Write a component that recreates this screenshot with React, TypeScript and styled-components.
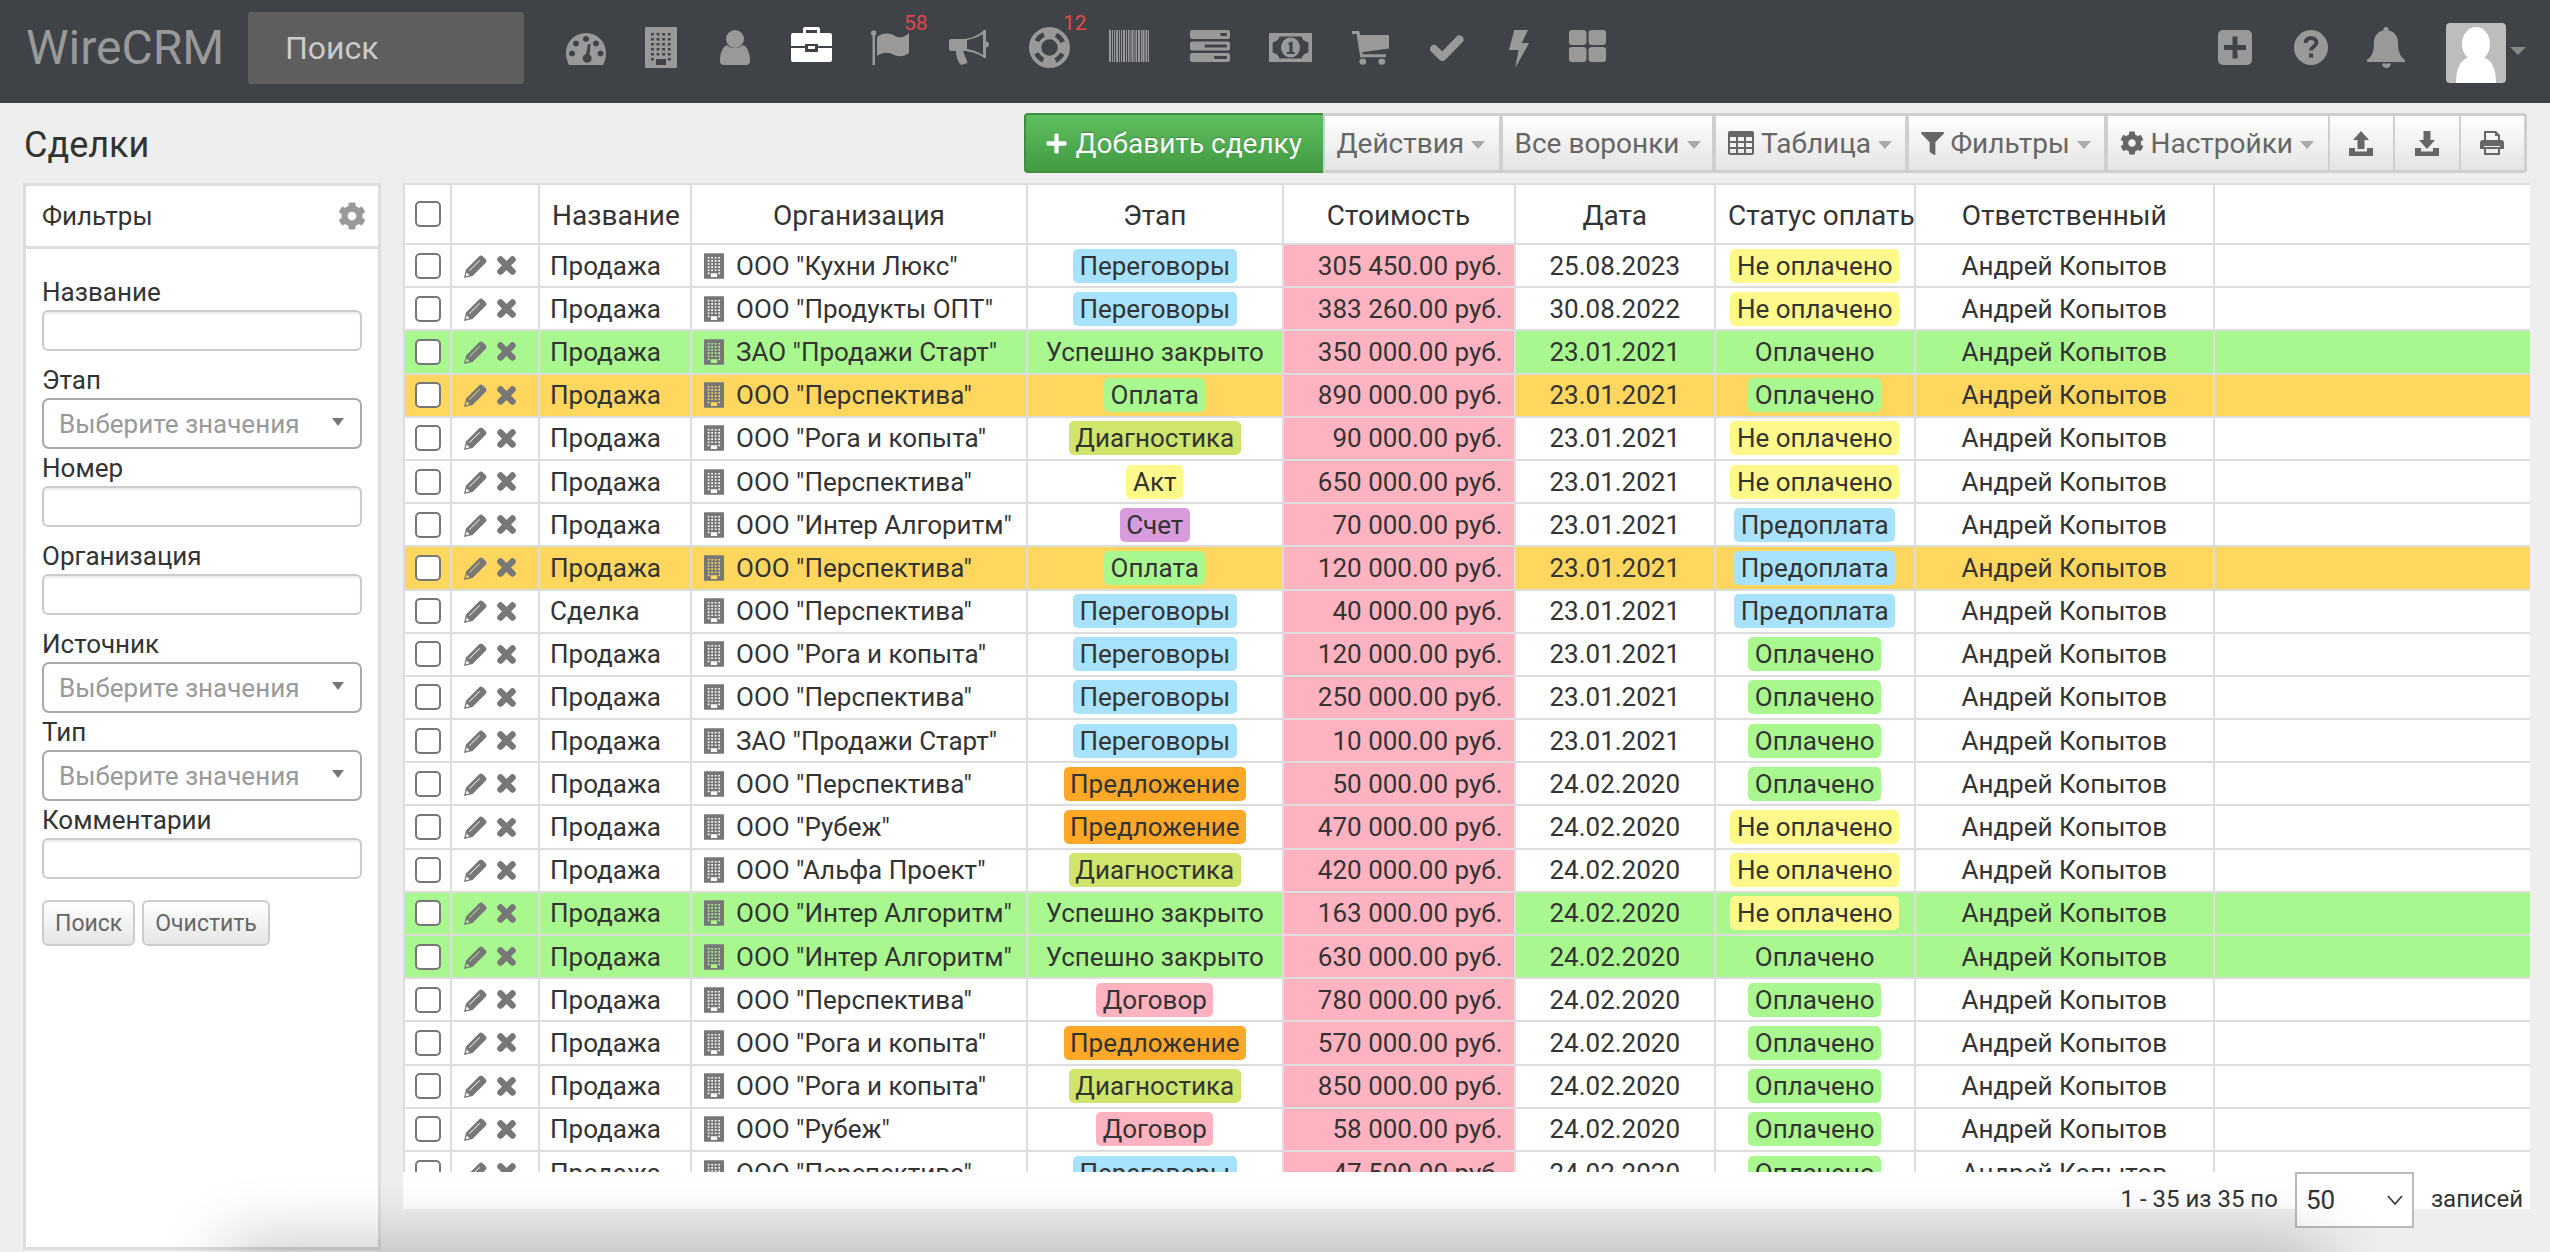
import React from "react";
import styled, { createGlobalStyle } from "styled-components";
import { FaCog, FaPlus, FaFilter } from "react-icons/fa";

const Global = createGlobalStyle`
  html, body { margin: 0; padding: 0; height: 1252px; overflow: hidden; background: #eeeeee; }
  body { font-family: Roboto, "Noto Sans", sans-serif; color: #333; }
  * { box-sizing: border-box; }
`;

const Page = styled.div`
  position: relative;
  width: 2550px;
  height: 1252px;
  overflow: hidden;
`;
const TopBar = styled.header`
  display: flex;
  align-items: flex-start;
  height: 103px;
  background: #3f4347;
  padding-left: 26px;
  padding-right: 24px;
`;
const Logo = styled.div`
  width: 222px;
  margin-top: 21px;
  font-size: 48px;
  line-height: 54px;
  color: #999;
`;
const SearchBox = styled.div`
  width: 276px;
  height: 72px;
  margin-top: 12px;
  padding-left: 37px;
  background: #5e5e5e;
  border-radius: 3px;
  font-size: 32px;
  line-height: 72px;
  color: #ccc;
`;
const Nav = styled.nav`
  display: flex;
  margin-left: 24px;
`;
const NavItem = styled.div<{ $w: number; $top: number; $on?: boolean }>`
  position: relative;
  display: flex;
  justify-content: center;
  width: ${(p) => p.$w}px;
  padding-top: ${(p) => p.$top}px;
  color: ${(p) => (p.$on ? "#fff" : "#999")};
`;
const Count = styled.span`
  position: absolute;
  top: 11px;
  left: 50%;
  margin-left: 14px;
  font-size: 21px;
  line-height: 24px;
  color: #e2474c;
`;
const RightNav = styled.div`
  display: flex;
  margin-left: auto;
  color: #999;
`;
const RightItem = styled.div<{ $w: number; $top: number }>`
  display: flex;
  justify-content: center;
  width: ${(p) => p.$w}px;
  padding-top: ${(p) => p.$top}px;
`;
const Avatar = styled.div`
  width: 60px;
  height: 60px;
  margin-top: 23px;
  margin-left: 23px;
  background: #bdbdbd;
  border-radius: 4px;
  overflow: hidden;
  color: #fff;
`;
const AvatarCaret = styled.div`
  width: 0;
  height: 0;
  margin-top: 47px;
  margin-left: 4px;
  border-left: 8px solid transparent;
  border-right: 8px solid transparent;
  border-top: 8px solid #888;
`;
const TitleRow = styled.div`
  display: flex;
  justify-content: space-between;
  align-items: flex-start;
  height: 80px;
  padding-left: 24px;
  padding-right: 23px;
`;
const Title = styled.h1`
  margin: 21px 0 0;
  font-size: 36px;
  line-height: 42px;
  font-weight: 400;
  color: #333;
`;
const Toolbar = styled.div`
  display: flex;
  margin-top: 10px;
  height: 60px;
`;
const ToolButton = styled.div<{ $w: number; $end?: boolean }>`
  display: flex;
  align-items: center;
  justify-content: ${(p) => (p.$end ? "center" : "flex-start")};
  gap: 7px;
  width: ${(p) => p.$w}px;
  padding-left: ${(p) => (p.$end ? 0 : 12)}px;
  background: linear-gradient(#ffffff, #e4e4e4);
  border: 2px solid #cfcfcf;
  border-left-width: ${(p) => (p.$end ? 0 : 2)}px;
  border-bottom-width: 3px;
  border-top-width: 3px;
  font-size: 28px;
  color: #666;
  white-space: nowrap;
  &:last-child { border-radius: 0 4px 4px 0; border-right-width: 3px; }
`;
const AddButton = styled.div`
  display: flex;
  align-items: center;
  gap: 8px;
  width: 299px;
  padding-left: 19px;
  background: linear-gradient(#5fbf5f, #429b42);
  border: 2px solid #3d8f3d;
  border-right: 0;
  border-radius: 4px 0 0 4px;
  font-size: 28px;
  color: #fff;
  text-shadow: 0 -1px 1px rgba(0, 0, 0, 0.25);
  white-space: nowrap;
`;
const Caret = styled.span`
  width: 0;
  height: 0;
  margin-top: 3px;
  border-left: 7.5px solid transparent;
  border-right: 7.5px solid transparent;
  border-top: 8px solid #aaa;
`;
const Content = styled.div`
  display: flex;
  align-items: flex-start;
  padding-left: 23px;
  padding-right: 20px;
  gap: 22px;
`;
const FilterPanel = styled.aside`
  flex: none;
  width: 358px;
  height: 1067px;
  background: #fff;
  border: 3px solid #ddd;
`;
const PanelHead = styled.div`
  display: flex;
  align-items: center;
  justify-content: space-between;
  height: 63px;
  padding: 0 12px 0 16px;
  border-bottom: 3px solid #ddd;
  font-size: 26px;
  color: #333;
  svg { color: #999; }
`;
const PanelBody = styled.div`
  padding: 26px 16px 0;
`;
const Field = styled.div`
  height: 88px;
`;
const FieldLabel = styled.label`
  display: block;
  height: 35px;
  font-size: 26px;
  line-height: 34px;
  color: #333;
`;
const TextBox = styled.div`
  width: 320px;
  height: 41px;
  background: #fff;
  border: 2px solid #ccc;
  border-radius: 6px;
  box-shadow: inset 0 2px 2px rgba(0, 0, 0, 0.07);
`;
const SelectBox = styled.div`
  display: flex;
  align-items: center;
  justify-content: space-between;
  width: 320px;
  height: 51px;
  padding: 0 16px 0 15px;
  background: #fff;
  border: 2px solid #aaa;
  border-radius: 7px;
  font-size: 26px;
  color: #999;
  white-space: nowrap;
`;
const SelectCaret = styled.span`
  width: 0;
  height: 0;
  margin-top: -3px;
  border-left: 6px solid transparent;
  border-right: 6px solid transparent;
  border-top: 8px solid #777;
`;
const ButtonRow = styled.div`
  display: flex;
  gap: 7px;
  margin-top: 9px;
`;
const FilterButton = styled.div`
  display: flex;
  align-items: center;
  justify-content: center;
  height: 46px;
  padding: 0 11px;
  background: linear-gradient(#ffffff, #e6e6e6);
  border: 2px solid #ccc;
  border-radius: 6px;
  font-size: 23px;
  color: #666;
`;
const Main = styled.main`
  flex: none;
  width: 2127px;
`;
const TableWrap = styled.div`
  height: 989px;
  overflow: hidden;
  background: #fff;
`;
const Table = styled.table`
  table-layout: fixed;
  width: 2127px;
  border-collapse: collapse;
  font-size: 26px;
  color: #333;
`;
const HeadRow = styled.tr`
  height: 60px;
`;
const Th = styled.th`
  padding: 2px 12px 0;
  border: 2px solid #ddd;
  background: #fff;
  font-size: 28px;
  font-weight: 400;
  text-align: center;
  white-space: nowrap;
  overflow: hidden;
`;
const CheckTh = styled(Th)`
  padding: 0;
`;
const Row = styled.tr<{ $tone?: string }>`
  height: 43.2px;
  background: ${(p) => (p.$tone === "green" ? "#a9f88f" : p.$tone === "orange" ? "#ffd75f" : "#fff")};
`;
const Td = styled.td<{ $align?: string }>`
  padding: 0 ${(p) => (p.$align === "right" ? "11px" : "0")} 0 ${(p) => (p.$align === "left" ? "10px" : "0")};
  border: 2px solid #ddd;
  text-align: ${(p) => p.$align || "center"};
  white-space: nowrap;
  overflow: hidden;
  line-height: 34px;
`;
const CostCell = styled(Td)`
  background: #ffb3c0;
`;
const CheckBox = styled.input.attrs({ type: "checkbox" })`
  appearance: none;
  display: block;
  width: 26px;
  height: 26px;
  margin: 0 0 0 10px;
  background: #fff;
  border: 2px solid #777;
  border-radius: 5px;
`;
const Actions = styled.div`
  display: flex;
  align-items: center;
  gap: 9px;
  padding-left: 12px;
  color: #777;
`;
const Org = styled.div`
  display: flex;
  align-items: center;
  gap: 12px;
  padding-left: 2px;
  svg { color: #777; flex: none; }
`;
const Badge = styled.span<{ $c: string }>`
  display: inline-block;
  height: 34px;
  padding: 0 6.5px;
  background: ${(p) => p.$c};
  border-radius: 5px;
  line-height: 34px;
`;
const Pager = styled.div`
  display: flex;
  justify-content: flex-end;
  align-items: flex-start;
  height: 37px;
  padding-right: 7px;
  background: #fff;
  font-size: 24px;
  color: #333;
`;
const PagerText = styled.span`
  margin-top: 12px;
  line-height: 30px;
  white-space: nowrap;
`;
const PageSize = styled.div`
  display: flex;
  align-items: center;
  justify-content: space-between;
  width: 119px;
  height: 56px;
  margin: 0 17px 0 17px;
  padding: 0 9px 0 9px;
  background: #fff;
  border: 2px solid #bbb;
  font-size: 26px;
  color: #333;
`;
const BottomShade = styled.div`
  position: absolute;
  left: 240px;
  right: 240px;
  top: 1262px;
  height: 30px;
  pointer-events: none;
  box-shadow: 0 0 70px 12px rgba(0, 0, 0, 0.3);
`;

/* ---------- icons ---------- */
const rect = (x: number, y: number, w: number, h: number) => `M${x} ${y}h${w}v${h}h${-w}z`;
const buildingPath = (() => {
  let d = "M1 0h30a1 1 0 0 1 1 1v39a1 1 0 0 1-1 1H1a1 1 0 0 1-1-1V1a1 1 0 0 1 1-1z";
  for (let r = 0; r < 5; r++) for (let c = 0; c < 4; c++) d += rect(6 + c * 5.6, 6 + r * 5, 2.8, 2.6);
  d += rect(6, 31, 2.8, 2.6) + rect(23, 31, 2.8, 2.6) + rect(11, 32, 10, 6);
  return d;
})();
const Building = ({ w = 32, h = 41 }: { w?: number; h?: number }) => (
  <svg width={w} height={h} viewBox="0 0 32 41" fill="currentColor"><path fillRule="evenodd" d={buildingPath} /></svg>
);
const Dashboard = () => (
  <svg width="40" height="32" viewBox="0 0 40 32" fill="currentColor">
    <path fillRule="evenodd" d="M3 32C1 28 0 24 0 20A20 20 0 0 1 40 20C40 24 39 28 37 32zM6 17.5a3 3 0 1 0 .01 0zM10 7.5a3 3 0 1 0 .01 0zM20 3a3 3 0 1 0 .01 0zM30 7.5a3 3 0 1 0 .01 0zM34.500 17.500a3 3 0 1 0 .01 0zM22 11l-2 10a4.500 4.500 0 1 0 3.500 .5l1-10.500z" />
  </svg>
);
const UserIcon = () => (
  <svg width="30" height="35" viewBox="0 0 30 35" fill="currentColor">
    <circle cx="15" cy="9" r="9" />
    <path d="M0 31C0 24 2 17 7 15C10 19 20 19 23 15C28 17 30 24 30 31a4 4 0 0 1-4 4H4a4 4 0 0 1-4-4z" />
  </svg>
);
const Briefcase = () => (
  <svg width="41" height="35" viewBox="0 0 41 35" fill="currentColor">
    <path d="M2 6H39a2 2 0 0 1 2 2V19H27V17H14V19H0V8a2 2 0 0 1 2-2z" />
    <path d="M12 6V2a2 2 0 0 1 2-2H27a2 2 0 0 1 2 2V6H26V3H15V6z" />
    <path d="M0 21H14V24a1 1 0 0 0 1 1H26a1 1 0 0 0 1-1V21H41V33a2 2 0 0 1-2 2H2a2 2 0 0 1-2-2z" />
    <path d="M17 19h7v3h-7z" />
  </svg>
);
const FlagIcon = () => (
  <svg width="39" height="35" viewBox="0 0 39 35" fill="currentColor">
    <rect x="1.500" y="3" width="2.500" height="32" />
    <circle cx="2.700" cy="3" r="2.700" />
    <path d="M6 7C12 2 20 3 24 6C29 9 34 7 38 3V23C33 27 28 27 23 25C18 22 12 22 6 26z" />
  </svg>
);
const Bullhorn = () => (
  <svg width="41" height="35" viewBox="0 0 41 35" fill="currentColor">
    <path fillRule="evenodd" d="M2 9H16C23 8 30 5 35 0H37V11.500a3 3 0 0 1 0 6V28H35C30 24 24 22 16 21H2a2 2 0 0 1-2-2V11a2 2 0 0 1 2-2zM18 10V19C24 20 29 22 34 25V4C29 7 24 9 18 10z" />
    <path d="M7 21H14L18 31a1.500 1.500 0 0 1-1 2.500L12 35C9 32 7 26 7 21z" />
  </svg>
);
const LifeRing = () => (
  <svg width="41" height="41" viewBox="0 0 41 41" fill="none" stroke="currentColor">
    <circle cx="20.500" cy="20.500" r="18.500" strokeWidth="4" />
    <circle cx="20.500" cy="20.500" r="10" strokeWidth="3.500" />
    <circle cx="20.500" cy="20.500" r="14.500" strokeWidth="9" strokeDasharray="12.800 10" strokeDashoffset="6.400" />
  </svg>
);
const barcodeBars: [number, number][] = [[0,2],[3,1],[5,1],[7,2],[10,1],[12,1],[14,2],[17,1],[19,1],[20.5,1],[22.5,2],[25.5,1],[27,1],[29,2],[32,1],[33.5,2],[36.500,1.500],[38.8,1.2]];
const Barcode = () => (
  <svg width="40" height="32" viewBox="0 0 40 32" fill="currentColor">
    {barcodeBars.map(([x, w]) => <rect key={x} x={x} y="0" width={w} height="32" />)}
  </svg>
);
const Tasks = () => (
  <svg width="40" height="32" viewBox="0 0 38 32" preserveAspectRatio="none" fill="currentColor">
    <path fillRule="evenodd" d="M2 0H36a2 2 0 0 1 2 2V7a2 2 0 0 1-2 2H2a2 2 0 0 1-2-2V2a2 2 0 0 1 2-2zM29 3v3h6V3zM2 11.500H36a2 2 0 0 1 2 2V18.500a2 2 0 0 1-2 2H2a2 2 0 0 1-2-2V13.500a2 2 0 0 1 2-2zM14 14.500v3h21v-3zM2 23H36a2 2 0 0 1 2 2V30a2 2 0 0 1-2 2H2a2 2 0 0 1-2-2V25a2 2 0 0 1 2-2zM23 26v3h12v-3z" />
  </svg>
);
const Money = () => (
  <svg width="43" height="29" viewBox="0 0 41 29" preserveAspectRatio="none" fill="currentColor">
    <path fillRule="evenodd" d="M0 0H41V29H0zM10 3.500H31Q32 8 37.500 9.500V19.500Q32 21 31 25.500H10Q9 21 3.500 19.500V9.500Q9 8 10 3.500zM20.500 4.500a9 10 0 1 0 .01 0zM19 9.500L22.500 8.500V19H24.500V21H17V19H19.500V11.500L18 12z" />
  </svg>
);
const Cart = () => (
  <svg width="37" height="34" viewBox="0 0 36 35" preserveAspectRatio="none" fill="currentColor">
    <path d="M0 0H7L8 4H36V18L10 22L10.500 24H33V27H8L4.500 3H0z" />
    <circle cx="10.500" cy="31.500" r="3.300" />
    <circle cx="29" cy="31.500" r="3.300" />
  </svg>
);
const Check = () => (
  <svg width="34" height="27" viewBox="0 0 33 27" preserveAspectRatio="none" fill="none" stroke="currentColor" strokeWidth="8" strokeLinejoin="round" strokeLinecap="round">
    <path d="M4 14L12 22L28.500 4.500" />
  </svg>
);
const Bolt = () => (
  <svg width="20" height="38" viewBox="0 0 19 38" preserveAspectRatio="none" fill="currentColor">
    <path d="M5 0H18L12 13H19L6 38L9 20H0z" />
  </svg>
);
const ThLarge = () => (
  <svg width="37" height="32" viewBox="0 0 35 32" preserveAspectRatio="none" fill="currentColor">
    <rect x="0" y="0" width="16.500" height="15" rx="3" />
    <rect x="18.500" y="0" width="16.500" height="15" rx="3" />
    <rect x="0" y="17" width="16.500" height="15" rx="3" />
    <rect x="18.500" y="17" width="16.500" height="15" rx="3" />
  </svg>
);
const PlusSquare = () => (
  <svg width="34" height="35" viewBox="0 0 34 35" fill="currentColor">
    <path fillRule="evenodd" d="M5 0H29a5 5 0 0 1 5 5V30a5 5 0 0 1-5 5H5a5 5 0 0 1-5-5V5a5 5 0 0 1 5-5zM14.500 6.500V15H6V20H14.500V28.500H19.500V20H28V15H19.500V6.500z" />
  </svg>
);
const Question = () => (
  <svg width="34" height="35" viewBox="0 0 34 35">
    <ellipse cx="17" cy="17.500" rx="17" ry="17.500" fill="currentColor" />
    <path d="M11.500 13c.5-3.500 3-5 5.500-5c3.500 0 5.500 2 5.500 4.500c0 4-5.500 4-5.500 8" fill="none" stroke="#3f4347" strokeWidth="3.800" />
    <rect x="15" y="23.500" width="4" height="4" fill="#3f4347" />
  </svg>
);
const Bell = () => (
  <svg width="38" height="41" viewBox="0 0 38 41" fill="currentColor">
    <path d="M19 0a2.500 2.500 0 0 1 2.500 3.200C27 4.500 31 9 31 15C31 25 33 29 38 33V35H0V33C5 29 7 25 7 15C7 9 11 4.500 16.500 3.200A2.500 2.500 0 0 1 19 0z" />
    <path d="M15 36.500a4.500 4.500 0 0 0 9 0z" />
  </svg>
);
const Pencil = () => (
  <svg width="24" height="24" viewBox="0 0 24 24" fill="currentColor">
    <path fillRule="evenodd" d="M0 24L2 15.500L15 2.500Q17 .5 19 2.500L21.500 5Q23.500 7 21.500 9L8.500 22zM1.800 22.200L5.500 21.300L2.700 18.500zM5 16.500L15.500 6L16 6.500L5.500 17z" />
  </svg>
);
const Cross = () => (
  <svg width="19" height="19" viewBox="0 0 19 19" fill="none" stroke="currentColor" strokeWidth="6.500" strokeLinecap="round">
    <path d="M3.500 3.500L15.500 15.500M15.500 3.500L3.500 15.500" />
  </svg>
);
const Silhouette = () => (
  <svg width="60" height="60" viewBox="0 0 60 60" fill="currentColor">
    <ellipse cx="30" cy="21" rx="14" ry="17" />
    <path d="M10 60C10 46 14 37 23 34H37C46 37 50 46 50 60z" />
  </svg>
);
const Chevron = () => (
  <svg width="16" height="10" viewBox="0 0 16 10" fill="none" stroke="#333" strokeWidth="1.600">
    <path d="M1 1L8 9L15 1" />
  </svg>
);
const TableIcon = () => (
  <svg width="26" height="24" viewBox="0 0 26 24" fill="currentColor">
    <path fillRule="evenodd" d="M2 0H24a2 2 0 0 1 2 2V22a2 2 0 0 1-2 2H2a2 2 0 0 1-2-2V2a2 2 0 0 1 2-2zM2 6v4h6V6zM10 6v4h6V6zM18 6v4h6V6zM2 12v4h6v-4zM10 12v4h6v-4zM18 12v4h6v-4zM2 18v4h6v-4zM10 18v4h6v-4zM18 18v4h6v-4z" />
  </svg>
);
const UploadIcon = () => (
  <svg width="24" height="25" viewBox="0 0 24 25" fill="currentColor">
    <path d="M12 0L20 9H15.500V18H8.500V9H4z" />
    <path d="M0 17H6V20.500H18V17H24V25H0z" />
  </svg>
);
const DownloadIcon = () => (
  <svg width="24" height="25" viewBox="0 0 24 25" fill="currentColor">
    <path d="M8.500 0H15.500V9H20L12 18L4 9H8.500z" />
    <path d="M0 17H6V20.500H18V17H24V25H0z" />
  </svg>
);
const PrintIcon = () => (
  <svg width="24" height="24" viewBox="0 0 24 24" fill="currentColor">
    <path fillRule="evenodd" d="M3 9H21a3 3 0 0 1 3 3V18H20V15H4V18H0V12a3 3 0 0 1 3-3zM4 9V0H16L20 4V9H18V5H15V2H6V9zM4 16H20V24H4zM6 18V22H18V18z" />
  </svg>
);

/* ---------- data ---------- */
const navItems: { w: number; top: number; icon: React.ReactNode; on?: boolean; count?: string }[] = [
  { w: 76, top: 33, icon: <Dashboard /> },
  { w: 74.5, top: 27, icon: <Building /> },
  { w: 73.5, top: 30, icon: <UserIcon /> },
  { w: 78, top: 27, icon: <Briefcase />, on: true },
  { w: 80, top: 30, icon: <FlagIcon />, count: "58" },
  { w: 79, top: 30, icon: <Bullhorn /> },
  { w: 80, top: 27, icon: <LifeRing />, count: "12" },
  { w: 80, top: 30, icon: <Barcode /> },
  { w: 81, top: 30, icon: <Tasks /> },
  { w: 80.5, top: 33, icon: <Money /> },
  { w: 79.5, top: 31, icon: <Cart /> },
  { w: 74, top: 35, icon: <Check /> },
  { w: 69, top: 30, icon: <Bolt /> },
  { w: 69, top: 30, icon: <ThLarge /> },
];

const stageColors: Record<string, string> = {
  "Переговоры": "#a8e2fd",
  "Оплата": "#a9f88f",
  "Диагностика": "#cfe56c",
  "Акт": "#fff98c",
  "Счет": "#d89bdc",
  "Предложение": "#ffa726",
  "Договор": "#ffb3c0",
  "Успешно закрыто": "transparent",
};
const statusColors: Record<string, string> = {
  "Не оплачено": "#fff98c",
  "Оплачено": "#a9f88f",
  "Предоплата": "#a8e2fd",
};

type Deal = [string, string, string, string, string, string, string?];
const P = 'ООО "Перспектива"';
const R = 'ООО "Рога и копыта"';
const I = 'ООО "Интер Алгоритм"';
const S = 'ЗАО "Продажи Старт"';
const G = 'ООО "Рубеж"';
const NO = "Не оплачено";
const YES = "Оплачено";
const PRE = "Предоплата";
const TALK = "Переговоры";
const WON = "Успешно закрыто";
const OFFER = "Предложение";
const DIAG = "Диагностика";
const PAY = "Оплата";
const DEAL = "Договор";

const deals: Deal[] = [
  ["Продажа", 'ООО "Кухни Люкс"', TALK, "305 450.00", "25.08.2023", NO],
  ["Продажа", 'ООО "Продукты ОПТ"', TALK, "383 260.00", "30.08.2022", NO],
  ["Продажа", S, WON, "350 000.00", "23.01.2021", YES, "green"],
  ["Продажа", P, PAY, "890 000.00", "23.01.2021", YES, "orange"],
  ["Продажа", R, DIAG, "90 000.00", "23.01.2021", NO],
  ["Продажа", P, "Акт", "650 000.00", "23.01.2021", NO],
  ["Продажа", I, "Счет", "70 000.00", "23.01.2021", PRE],
  ["Продажа", P, PAY, "120 000.00", "23.01.2021", PRE, "orange"],
  ["Сделка", P, TALK, "40 000.00", "23.01.2021", PRE],
  ["Продажа", R, TALK, "120 000.00", "23.01.2021", YES],
  ["Продажа", P, TALK, "250 000.00", "23.01.2021", YES],
  ["Продажа", S, TALK, "10 000.00", "23.01.2021", YES],
  ["Продажа", P, OFFER, "50 000.00", "24.02.2020", YES],
  ["Продажа", G, OFFER, "470 000.00", "24.02.2020", NO],
  ["Продажа", 'ООО "Альфа Проект"', DIAG, "420 000.00", "24.02.2020", NO],
  ["Продажа", I, WON, "163 000.00", "24.02.2020", NO, "green"],
  ["Продажа", I, WON, "630 000.00", "24.02.2020", YES, "green"],
  ["Продажа", P, DEAL, "780 000.00", "24.02.2020", YES],
  ["Продажа", R, OFFER, "570 000.00", "24.02.2020", YES],
  ["Продажа", R, DIAG, "850 000.00", "24.02.2020", YES],
  ["Продажа", G, DEAL, "58 000.00", "24.02.2020", YES],
  ["Продажа", P, TALK, "47 500.00", "24.02.2020", YES],
];

const columns = [47, 88, 152, 336, 255.5, 232, 200.5, 199.5, 299.5, 317];
const headers = ["", "Название", "Организация", "Этап", "Стоимость", "Дата", "Статус оплаты", "Ответственный", ""];

const filters: { label: string; select?: boolean }[] = [
  { label: "Название" },
  { label: "Этап", select: true },
  { label: "Номер" },
  { label: "Организация" },
  { label: "Источник", select: true },
  { label: "Тип", select: true },
  { label: "Комментарии" },
];

const statusColor = (status: string, tone?: string) =>
  tone === "green" && status === "Оплачено" ? "transparent" : statusColors[status];

export default function App() {
  return (
    <Page>
      <Global />
      <TopBar>
        <Logo>WireCRM</Logo>
        <SearchBox>Поиск</SearchBox>
        <Nav>
          {navItems.map((n, i) => (
            <NavItem key={i} $w={n.w} $top={n.top} $on={n.on}>
              {n.icon}
              {n.count && <Count>{n.count}</Count>}
            </NavItem>
          ))}
        </Nav>
        <RightNav>
          <RightItem $w={74} $top={30}><PlusSquare /></RightItem>
          <RightItem $w={77} $top={30}><Question /></RightItem>
          <RightItem $w={74} $top={27}><Bell /></RightItem>
          <Avatar><Silhouette /></Avatar>
          <AvatarCaret />
        </RightNav>
      </TopBar>
      <TitleRow>
        <Title>Сделки</Title>
        <Toolbar>
          <AddButton><FaPlus size={23} />Добавить сделку</AddButton>
          <ToolButton $w={178}>Действия<Caret /></ToolButton>
          <ToolButton $w={213.5}>Все воронки<Caret /></ToolButton>
          <ToolButton $w={192.5}><TableIcon />Таблица<Caret /></ToolButton>
          <ToolButton $w={199}><FaFilter size={23} />Фильтры<Caret /></ToolButton>
          <ToolButton $w={224}><FaCog size={24} />Настройки<Caret /></ToolButton>
          <ToolButton $w={65} $end><UploadIcon /></ToolButton>
          <ToolButton $w={66} $end><DownloadIcon /></ToolButton>
          <ToolButton $w={66.5} $end><PrintIcon /></ToolButton>
        </Toolbar>
      </TitleRow>
      <Content>
        <FilterPanel>
          <PanelHead>Фильтры<FaCog size={28} /></PanelHead>
          <PanelBody>
            {filters.map((f) => (
              <Field key={f.label}>
                <FieldLabel>{f.label}</FieldLabel>
                {f.select ? <SelectBox>Выберите значения<SelectCaret /></SelectBox> : <TextBox />}
              </Field>
            ))}
            <ButtonRow>
              <FilterButton>Поиск</FilterButton>
              <FilterButton>Очистить</FilterButton>
            </ButtonRow>
          </PanelBody>
        </FilterPanel>
        <Main>
          <TableWrap>
            <Table>
              <colgroup>
                {columns.map((w, i) => <col key={i} width={w} />)}
              </colgroup>
              <thead>
                <HeadRow>
                  <CheckTh><CheckBox /></CheckTh>
                  {headers.map((h, i) => <Th key={i}>{h}</Th>)}
                </HeadRow>
              </thead>
              <tbody>
                {deals.map((d, i) => (
                  <Row key={i} $tone={d[6]}>
                    <Td><CheckBox /></Td>
                    <Td><Actions><Pencil /><Cross /></Actions></Td>
                    <Td $align="left">{d[0]}</Td>
                    <Td $align="left"><Org><Building w={20} h={26} />{d[1]}</Org></Td>
                    <Td><Badge $c={stageColors[d[2]]}>{d[2]}</Badge></Td>
                    <CostCell $align="right">{d[3]} руб.</CostCell>
                    <Td>{d[4]}</Td>
                    <Td><Badge $c={statusColor(d[5], d[6])}>{d[5]}</Badge></Td>
                    <Td>Андрей Копытов</Td>
                    <Td />
                  </Row>
                ))}
              </tbody>
            </Table>
          </TableWrap>
          <Pager>
            <PagerText>1 - 35 из 35 по</PagerText>
            <PageSize>50<Chevron /></PageSize>
            <PagerText>записей</PagerText>
          </Pager>
        </Main>
      </Content>
      <BottomShade />
    </Page>
  );
}
